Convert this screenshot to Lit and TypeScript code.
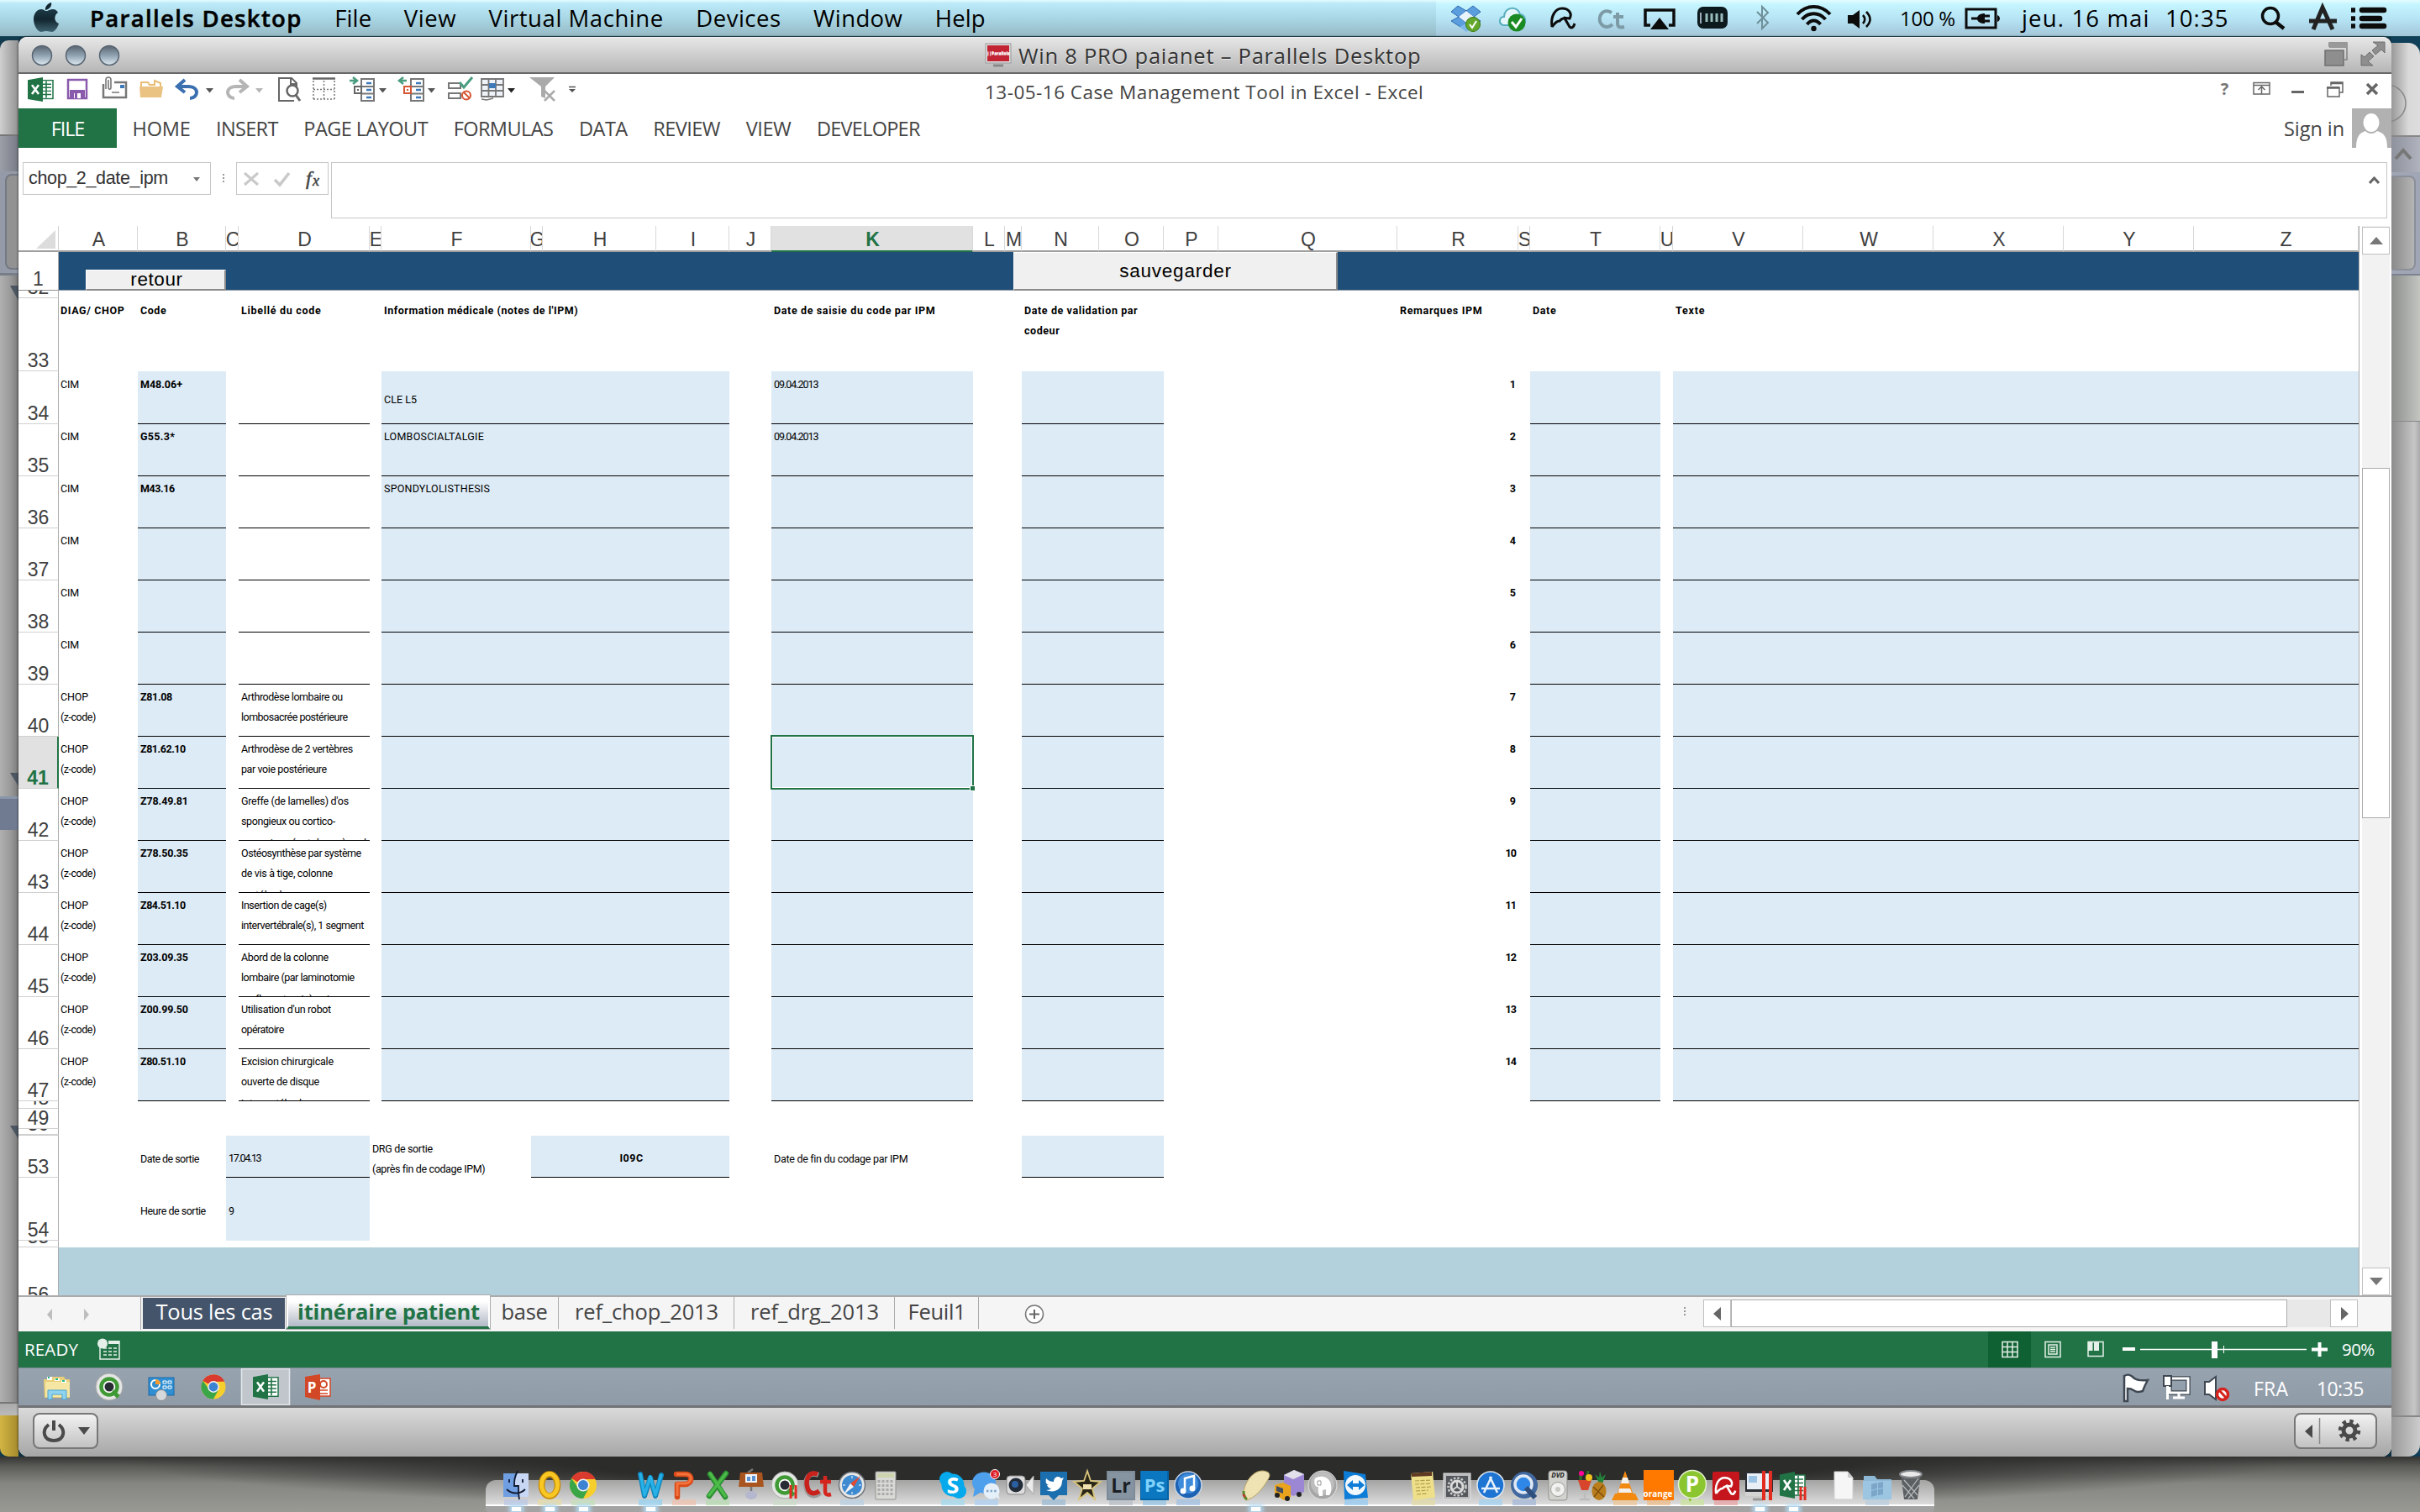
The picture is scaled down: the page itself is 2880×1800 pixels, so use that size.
import { LitElement, html, css, svg, nothing, TemplateResult } from "lit";
import { customElement, property } from "lit/decorators.js";

/** A single line of text whose tracking is adjusted to fill a given width. */
@customElement("fit-text")
class FitText extends LitElement {
  @property({ type: Number }) w = 0;
  @property() text = "";
  static styles = css`
    :host { display: inline-block; white-space: pre; flex: none; }
    .run { display: inline-block; white-space: pre; }
  `;
  protected updated() {
    const run = this.renderRoot.querySelector(".run") as HTMLElement;
    run.style.letterSpacing = "0px";
    const natural = run.getBoundingClientRect().width;
    const count = this.text.length;
    if (this.w && count > 1) {
      run.style.letterSpacing = `${(this.w - natural) / (count - 0.5)}px`;
    }
  }
  render() {
    return html`<span class="run">${this.text}</span>`;
  }
}

const fit = (text: string, w: number) => html`<fit-text .text=${text} .w=${w}></fit-text>`;

/* ---------- sheet geometry and data ---------- */
const LETTERS = "ABCDEFGHIJKLMNOPQRSTUVWXYZ".split("");
const EDGES = [70, 164, 269, 284, 440, 454, 632, 646, 781, 868, 918, 1158, 1196, 1216, 1308, 1385, 1450, 1663, 1807, 1821, 1976, 1991, 2146, 2301, 2456, 2611, 2807];
const COLS = EDGES.slice(1).map((e, i) => e - EDGES[i]);
const ROWS: [string, number][] = [
  ["1", 46], ["32", 9], ["33", 87], ["34", 63],
  ...Array.from({ length: 13 }, (_, i): [string, number] => [String(35 + i), 62]),
  ["48", 9], ["49", 24], ["50", 7], ["", 1], ["53", 50], ["54", 75], ["55", 8], ["56", 69],
];
const rowLine = (name: string) => ROWS.findIndex((r) => r[0] === name) + 2;
const colLine = (l: string) => LETTERS.indexOf(l) + 2;
const GRID = `grid-template-columns:48px ${COLS.map((c) => c + "px").join(" ")};grid-template-rows:31px ${ROWS.map((r) => r[1] + "px").join(" ")}`;
const area = (row: string, from: string, to: string) => `grid-area:${rowLine(row)}/${colLine(from)}/auto/${colLine(to) + 1}`;

type Line = [string, number];
const CODES: { code?: Line; label?: Line[]; info?: Line; date?: boolean; chop?: boolean }[] = [
  { code: ["M48.06+", 50], info: ["CLE L5", 39], date: true },
  { code: ["G55.3*", 41], info: ["LOMBOSCIALTALGIE", 119], date: true },
  { code: ["M43.16", 41], info: ["SPONDYLOLISTHESIS", 126] },
  {}, {}, {},
  { chop: true, code: ["Z81.08", 38], label: [["Arthrodèse lombaire ou", 121], ["lombosacrée postérieure", 127]] },
  { chop: true, code: ["Z81.62.10", 54], label: [["Arthrodèse de 2 vertèbres", 133], ["par voie postérieure", 102]] },
  { chop: true, code: ["Z78.49.81", 57], label: [["Greffe (de lamelles) d'os", 128], ["spongieux ou cortico-", 112], ["spongieux (autologue) prel", 149]] },
  { chop: true, code: ["Z78.50.35", 57], label: [["Ostéosynthèse par système", 143], ["de vis à tige, colonne", 109], ["vertébrale", 55]] },
  { chop: true, code: ["Z84.51.10", 54], label: [["Insertion de cage(s)", 102], ["intervertébrale(s), 1 segment", 146]] },
  { chop: true, code: ["Z03.09.35", 57], label: [["Abord de la colonne", 104], ["lombaire (par laminotomie", 135], ["ou flavectomie) unique", 125]] },
  { chop: true, code: ["Z00.99.50", 57], label: [["Utilisation d'un robot", 107], ["opératoire", 51]] },
  { chop: true, code: ["Z80.51.10", 54], label: [["Excision chirurgicale", 110], ["ouverte de disque", 93], ["intervertébral", 72]] },
];
const HEADS: [string, string, Line[]][] = [
  ["A", "A", [["DIAG/ CHOP", 76]]], ["B", "B", [["Code", 31]]], ["D", "D", [["Libellé du code", 95]]],
  ["F", "I", [["Information médicale (notes de l'IPM)", 231]]],
  ["K", "K", [["Date de saisie du code par IPM", 192]]],
  ["N", "O", [["Date de validation par", 135], ["codeur", 42]]],
  ["R", "R", [["Remarques IPM", 98]]], ["T", "T", [["Date", 28]]], ["V", "V", [["Texte", 35]]],
];

/* ---------- shared drawings ---------- */
const excelMark = svg`<rect x="13" y="4" width="17" height="24" fill="#fff" stroke="#217346" stroke-width="1.5"/><path d="M16 9h12M16 13.500h12M16 18h12M16 22.500h12M22 5v22" stroke="#217346" stroke-width="1.600"/><path d="M0 3.500 18 0v32L0 28.500z" fill="#217346"/><path d="m5 10 8 12m0-12-8 12" stroke="#fff" stroke-width="2.600"/>`;
const chromeMark = (cx: number, cy: number, r: number) => svg`<g transform="translate(${cx} ${cy}) scale(${r / 16})"><circle r="16" fill="#f7cf2d"/><path d="M0 0-13.900-8A16 16 0 0 1 13.900-8L0-7z" fill="#db3a2e"/><path d="M0-16A16 16 0 0 1 14.500-7H0z" fill="#db3a2e"/><path d="M-13.900-8A16 16 0 0 0 0 16L6.500 4-6 3z" fill="#3aa648"/><circle r="7.600" fill="#f4f4f4"/><circle r="6" fill="#3d83d3"/></g>`;
const qlikMark = svg`<circle cx="20" cy="20" r="16" fill="#e3e6e3" stroke="#a9aaa9"/><circle cx="20" cy="20" r="9.500" fill="#fff" stroke="#3f9a35" stroke-width="4.500"/><path d="m24 25 7 7" stroke="#3f9a35" stroke-width="5"/><circle cx="20" cy="20" r="5.500" fill="#282d33"/>`;
const umbrella = (c: string) => svg`<path d="M5 27C3 14 9 5 17 5c9 0 12 7 9 12-4-1-9-1-12 3-4 0-6 3-9 7M19 15l7 12q4 3 6-4" fill="none" stroke="${c}" stroke-width="3"/>`;
const bars = svg`<path d="M27 20v16M33 20v16" stroke="#e22c20" stroke-width="3"/>`;
const letter = (s: string, size: number, fill: string, x = 20, y = 32) => svg`<text x="${x}" y="${y}" font-size="${size}" font-weight="700" font-family="Open Sans, sans-serif" text-anchor="middle" fill="${fill}">${s}</text>`;

type DockIcon = { art: TemplateResult | unknown; on?: boolean; glow?: string };
const gap = null;
const DOCK: (DockIcon | null)[] = [
  { on: true, glow: "#b9c6e6", art: svg`<rect x="5" y="6" width="30" height="28" fill="#c8d7f4"/><path d="M5 6h17c-3 7-4 10-4 15h5c0 5 0 9 1 13H5z" fill="#6f9fe2"/><path d="M22 3c-4 8-4 12-4 18h5c0 6 0 10 1 16M12 13v4M28 13v4M9 25c6 6 16 6 22 0" fill="none" stroke="#111a30" stroke-width="1.800"/>` },
  { on: true, glow: "#e9dba0", art: svg`<ellipse cx="20" cy="20" rx="9.500" ry="13" fill="none" stroke="#c68b05" stroke-width="7.500"/><ellipse cx="20" cy="19.500" rx="9.500" ry="13" fill="none" stroke="#f8c724" stroke-width="5"/>` },
  { on: true, glow: "#c5dfb3", art: chromeMark(20, 20, 16) },
  gap,
  { on: true, glow: "#8fd0ef", art: svg`<path d="m8 7 5 26 7-22 6 22 7-25" fill="none" stroke="#0f86bd" stroke-width="6" stroke-linejoin="round" stroke-linecap="round"/><path d="m8 6 5 26 7-22 6 22 7-25" fill="none" stroke="#27b1e6" stroke-width="3.500" stroke-linejoin="round"/>` },
  { glow: "#f0c0ac", art: svg`<path d="M12 34V19h9c9 0 10-12 1-12H11" fill="none" stroke="#d84a17" stroke-width="6.500" stroke-linejoin="round" stroke-linecap="round"/><path d="M12 33V18h9c9 0 10-11 1-11H11" fill="none" stroke="#f5723c" stroke-width="3"/>` },
  { glow: "#b5dcae", art: svg`<path d="m10 33 20-27M11 7l18 27" stroke="#2b8f30" stroke-width="6.500" stroke-linecap="round"/><path d="m10 32 20-26M11 6l18 27" stroke="#4dbb4a" stroke-width="3.500" stroke-linecap="round"/>` },
  { art: svg`<path d="M16 5 22 1M20 20v14" stroke="#777" stroke-width="2.500"/><path d="M7 5h26l2 17H5z" fill="#a9551f"/><rect x="13" y="7" width="14" height="10" fill="#f1f4f9"/><path d="M15 15v-5h4v5m2 0V9h4v6" fill="#5d93d4"/><ellipse cx="20" cy="32" rx="7" ry="5" fill="#b5b7cf"/>` },
  { glow: "#cbdcc7", art: svg`${qlikMark}${bars}` },
  { art: svg`<path d="M20 8C8 3 3 14 6 25c3 9 11 9 16 4" fill="none" stroke="#999" stroke-width="6"/><path d="M19 7C9 3 4 13 7 23c2 8 9 8 14 4" fill="none" stroke="#c9211c" stroke-width="5.500"/><path d="M28 9v18c0 5 3 5 7 4M22 16h13" fill="none" stroke="#d4261f" stroke-width="4.500"/>` },
  { glow: "#b7cfe4", art: svg`<circle cx="20" cy="20" r="15.500" fill="#e7e7e7" stroke="#70757b" stroke-width="1.500"/><circle cx="20" cy="20" r="12" fill="#3e8ad0"/><path d="m30 9-8 13-4-4z" fill="#e04a33"/><path d="m10 31 8-13 4 4z" fill="#f3f3f3"/><path d="M20 9v3m0 16v3M9 20h3m16 0h3" stroke="#fff"/>` },
  { art: svg`<rect x="8" y="4" width="24" height="33" rx="1" fill="#d9d9d5" stroke="#92928e"/><rect x="10" y="6" width="20" height="5" fill="#ccd4ad"/><path d="M12 14v20M17 14v20M22 14v20M27 14v20" stroke="#aaa" stroke-width="3" stroke-dasharray="3 2"/>` },
  gap,
  { glow: "#9fdcf2", art: svg`<circle cx="20" cy="20" r="13.500" fill="#05a9ec"/><circle cx="13" cy="13" r="9" fill="#05a9ec"/><circle cx="27" cy="27" r="9" fill="#05a9ec"/>${letter("S", 27, "#fff", 20, 30)}` },
  { glow: "#a9d0f2", art: svg`<ellipse cx="17" cy="17" rx="14" ry="12.500" fill="#4e9fec"/><path d="m6 24-2 10 10-6z" fill="#4e9fec"/><circle cx="26" cy="27" r="9.500" fill="#e5f0fa"/><path d="m30 33 6 4-3-9z" fill="#e5f0fa"/><path d="M20 27h12" stroke="#7ba3c9" stroke-width="2.400" stroke-dasharray="2.400 2.200"/><circle cx="30" cy="7" r="5.500" fill="#dc1f26" stroke="#fff"/><text x="30" y="10" font-size="8" text-anchor="middle" fill="#fff" font-family="Open Sans, sans-serif">3</text>` },
  { art: svg`<rect x="4" y="9" width="22" height="22" rx="4" fill="#ddd" stroke="#888"/><path d="m27 20 9-11v22z" fill="#ececec" stroke="#aaa"/><circle cx="15" cy="20" r="8.500" fill="#222b38"/><circle cx="14" cy="19" r="4" fill="#2b5fa3"/>` },
  { glow: "#98b9d4", art: svg`<path d="M4 4h32v28H26l-6 6-6-6H4z" fill="#1c6fae"/><path d="M11 12c3 3 6 4 9 4 0-6 6-8 9-4l3-1-2 4c0 10-9 15-19 11 3 0 5-1 6-2-3 0-4-2-5-4h2c-3-1-4-3-3-8z" fill="#fff"/>` },
  { art: svg`<path d="m20 3 4 12 12 1-10 8 3 13-9-8-10 8 4-13L4 16l12-1z" fill="#2b2718" stroke="#d9c57d" stroke-width="1.800"/><path d="M15 19h10v6H15z" fill="#efe2ae"/>` },
  { glow: "#b6bec6", art: svg`<rect x="3" y="3" width="34" height="35" fill="#7d8b98"/><rect x="5" y="5" width="30" height="31" fill="#8694a1"/>${letter("Lr", 23, "#1b1e22", 20, 29)}` },
  { glow: "#8fc3e6", art: svg`<rect x="3" y="3" width="34" height="35" fill="#0563a6"/><rect x="4" y="3" width="31" height="33" fill="#0a77c0"/>${letter("Ps", 22, "#7fd2fb", 20, 28)}` },
  { glow: "#9dbfe4", art: svg`<circle cx="20" cy="20" r="16" fill="#1e62b4" stroke="#c8d4e0" stroke-width="1.500"/><circle cx="20" cy="18" r="12" fill="#3d8bdb"/><path d="M16 26V12l11-3v14" fill="none" stroke="#fff" stroke-width="2.500"/><circle cx="14" cy="27" r="3.500" fill="#fff"/><circle cx="25" cy="24" r="3.500" fill="#fff"/>` },
  gap,
  { on: true, art: svg`<path d="M7 36C2 26 14 2 29 3c10 1 9 6 5 12C28 25 20 35 9 38z" fill="#efe3b4" stroke="#b7a564"/><path d="M6 27c0 5 1 8 4 10" stroke="#5f8a2a" stroke-width="3" fill="none"/><path d="m5 31 3 3" stroke="#c33" stroke-width="2"/>` },
  { art: svg`<path d="m14 8 12-6 12 5v21l-13 5-11-6z" fill="#9b87d4"/><path d="m14 8 12-6 12 5-13 6z" fill="#e2e0ea"/><path d="m3 20 10-3 9 4v13l-8 4-11-7z" fill="#e9a31c"/><path d="m5 21 8 3v6l-8-3z" fill="#444c5e"/><circle cx="6" cy="32" r="3" fill="#222"/><circle cx="18" cy="36" r="3" fill="#222"/><circle cx="32" cy="31" r="3" fill="#222"/>` },
  { art: svg`<circle cx="20" cy="20" r="17" fill="#a6a6a6" stroke="#e2e2e2"/><circle cx="20" cy="18" r="14" fill="#bdbdbd"/><path d="M11 12c6-4 14-3 18 4 2 6 2 12-1 16h-4v-7l-4 1v7h-4c-2-7-1-8-1-11-4 1-6-5-4-10z" fill="#fff"/><path d="M14 15h4v5h-4z" fill="none" stroke="#999"/>` },
  { glow: "#8fcaf5", art: svg`<path d="m5 3 26 4 3 28-28 2z" fill="#0d7dd8"/><circle cx="19" cy="20" r="12" fill="#f3f8fc"/><path d="m9 20 7-6v4h7v-4l7 6-7 6v-4h-7v4z" fill="#0d7dd8"/>` },
  gap,
  { glow: "#e4dca2", art: svg`<path d="m5 6 26-2 3 31-26 3z" fill="#eee08a"/><path d="m5 6 25-2v5L6 10z" fill="#5f3a22"/><path d="m10 15 19-1M10 19l19-1M11 23l18-1M11 27l15-1M12 31l12-1" stroke="#b09f49" stroke-width="1.200" stroke-dasharray="5 1.500"/>` },
  { art: svg`<rect x="4" y="6" width="32" height="31" fill="#b9bbbd" stroke="#e2e2e2"/><rect x="7" y="9" width="26" height="25" fill="#54585c"/><circle cx="20" cy="22" r="7" fill="none" stroke="#dadada" stroke-width="3"/><circle cx="20" cy="22" r="10.500" fill="none" stroke="#cfcfcf" stroke-width="2.500" stroke-dasharray="2.500 2"/><path d="M20 22v-7m0 7-6 4m6-4 6 4" stroke="#dadada" stroke-width="2"/>` },
  { glow: "#9ed2f4", art: svg`<circle cx="20" cy="20" r="16" fill="#1e74d2" stroke="#dce6f0" stroke-width="1.600"/><path d="m12 29 9-19M19 10l9 19M9 24h22" stroke="#e8f2fc" stroke-width="2.600"/>` },
  { glow: "#9fb6d8", art: svg`<circle cx="20" cy="20" r="16" fill="#41699f"/><circle cx="19" cy="19" r="10" fill="#2f88e8" stroke="#dfe8f4" stroke-width="3.500"/><path d="m22 23 11 12" stroke="#304f7d" stroke-width="6"/>` },
  { art: svg`<rect x="9" y="3" width="22" height="35" rx="3" fill="#d2d2ce" stroke="#91918d"/><text x="20" y="11" font-size="8" font-weight="700" font-style="italic" text-anchor="middle" font-family="Open Sans, sans-serif" fill="#222">DVD</text><circle cx="20" cy="25" r="8.500" fill="#f1f1ef" stroke="#9b9b97"/><circle cx="20" cy="25" r="3" fill="#c8c8c4"/>` },
  { art: svg`<path d="M4 14h16l-4 12h-8z" fill="#d8452d"/><path d="M12 26v10M6 37h12" stroke="#bcbcbc" stroke-width="2.500"/><path d="M7 4v10M16 3l-2 11" stroke="#2f6f2a" stroke-width="3"/><circle cx="8" cy="6" r="3" fill="#f09"/><circle cx="17" cy="11" r="4" fill="#f2c11d"/><path d="m29 18-5-11 5 4 1-8 2 8 5-4-4 11z" fill="#23823a"/><ellipse cx="29" cy="27" rx="8.500" ry="11" fill="#b97d1c"/><path d="m22 22 13 12m-1-14L23 34" stroke="#7c4d0c" stroke-width="1.400"/>` },
  { glow: "#efc591", art: svg`<path d="M8 30h24l4 8H4z" fill="#f28a12"/><path d="M20 3 10 32h20z" fill="#f28a12"/><path d="m17 11-2 7h10l-2-7zM13 24l-1 5h16l-2-5z" fill="#f4f1ec"/>` },
  { glow: "#efba82", art: svg`<rect x="2" y="2" width="36" height="36" fill="#ff7900"/><text x="19" y="34" font-size="10" font-weight="700" text-anchor="middle" font-family="Open Sans, sans-serif" fill="#fff">orange</text>` },
  { glow: "#cae49a", art: svg`<path d="M14 32l3 8 6-9z" fill="#86bd2b"/><circle cx="20" cy="19" r="16.500" fill="#8bc52f" stroke="#e7f3d2" stroke-width="1.500"/>${letter("P", 26, "#fff", 20, 28)}` },
  { glow: "#e7a0a0", art: svg`<rect x="4" y="4" width="32" height="34" rx="2" fill="#c4161c"/><g transform="translate(4 7) scale(.85)">${umbrella("#fff")}</g>` },
  { on: true, art: svg`<rect x="3" y="4" width="33" height="24" fill="#2b2f35"/><rect x="5" y="6" width="26" height="19" fill="#e9eff6"/><path d="M7 9h10v8H7z" fill="#9cc3e4"/><path d="M3 28h30v5H3z" fill="#d3d3d3"/><path d="M12 37h12" stroke="#999" stroke-width="3"/><path d="M25 3v35M33 3v35" stroke="#e22c20" stroke-width="4"/>` },
  { on: true, art: svg`<g transform="translate(4 4)">${excelMark}</g><path d="M29 22v16M34 22v16" stroke="#e22c20" stroke-width="3"/>` },
];
const DOCK_END: DockIcon[] = [
  { art: svg`<path d="M9 4h16l6 7v26H9z" fill="#f6f6f6" stroke="#cfcfcf"/><path d="M25 4v7h6z" fill="#c9c9c9"/>` },
  { glow: "#b7cfe0", art: svg`<path d="M4 9h13l3 4h17v24H4z" fill="#8db8d6"/><path d="M3 15h34v22H3z" fill="#9cc5e1"/><path d="m13 19 7-2v7l-7 2zm8-2 6-1v7l-6 1zm-8 10 7-2v7l-7 2zm8-2 6-1v7l-6 1z" fill="#7ba6c8"/>` },
  { art: svg`<path d="m8 6 4 31h16l4-31z" fill="#5d6063"/><ellipse cx="20" cy="7" rx="13" ry="4" fill="#e9e9e9" stroke="#83878b" stroke-width="2"/><path d="m12 14 16 18m1-20L13 34M10 20l14 16M30 20 17 36" stroke="#b9bcbf" stroke-width="1.200"/>` },
];

@customElement("app-root")
class AppRoot extends LitElement {
  static styles = css`
    :host { display: block; width: 2880px; height: 1800px; overflow: hidden; background: #8b8b87; font-family: "Open Sans", "Noto Sans", sans-serif; color: #444; }
    * { box-sizing: border-box; }
    svg { display: block; flex: none; }
    .screen { width: 2880px; height: 1800px; display: flex; flex-direction: column; }
    .menubar { height: 44px; flex: none; display: flex; align-items: center; padding-bottom: 1px; border-bottom: 1px solid #17485a; color: #000; font-size: 27.5px; background: linear-gradient(180deg, #e4fbff 0, #bdeaf9 4px, #a9d6e4 22px, #95b9c4 43px); }
    .menus { display: flex; gap: 38.5px; width: 1602px; flex: none; }
    .menus .app { font-weight: 600; -webkit-text-stroke: .5px #000; }
    .apple { width: 107px; }
    .extras { display: flex; align-items: center; height: 43px; width: 1171px; background: linear-gradient(180deg, #e4fcff 0, #c5f6ff 5px, #b5e2f3 24px, #a2c6d8 43px); }
    .pct { font-size: 24px; width: 77px; }
    .day { width: 171px; margin-left: 20px; }
    .clock { width: 109px; }
    .stage { height: 1690px; flex: none; display: flex; background: #0e3548; }
    .side { flex: none; display: flex; flex-direction: column; }
    .side > div { flex: none; }
    .side.west { width: 22px; padding-top: 4px; background: #123b4d; }
    .l-top { height: 114px; border-radius: 10px 0 0 0; background: linear-gradient(90deg, #cfcfcf, #929292); border-bottom: 2px solid #777; }
    .l-tool { height: 42px; background: linear-gradient(90deg, #9c9fa8, #777b85); }
    .l-card { height: 124px; padding: 3px 0 4px 6px; background: #949aa7; border-bottom: 3px solid #787e89; }
    .l-card i { display: block; height: 100%; border: 2px solid #747a83; border-right: 0; border-radius: 8px 0 0 8px; background: #929292; }
    .l-body { height: 1341px; background: linear-gradient(90deg, #b0b0b0, #989898 60%, #7a7a7a); }
    .l-foot { height: 16px; background: linear-gradient(#aaa, #bbb); border-top: 2px solid #777; }
    .l-yellow { height: 49px; background: linear-gradient(90deg, #d3b544, #a58a2c); border-radius: 0 0 0 10px; }
    .side.east { width: 34px; padding-top: 7px; background: #104059; }
    .r-top { height: 112px; border-radius: 0 14px 0 0; background: linear-gradient(90deg, #999, #d9d9d9 60%, #ddd); border-bottom: 2px solid #888; }
    .r-tool { height: 42px; background: linear-gradient(90deg, #8e929c, #b0b3bd); }
    .r-card { height: 123px; background: #a1a6b6; padding: 4px 5px 4px 0; border-bottom: 2px solid #7d8290; }
    .r-card i { display: block; height: 100%; background: linear-gradient(90deg, #8a8a8a, #b5b5b5); border: 2px solid #8b8f98; border-left: 0; border-radius: 0 8px 8px 0; }
    .r-doc { height: 174px; background: linear-gradient(90deg, #8d8f8d, #c3c5c1); border-bottom: 1px solid #888; }
    .r-body { height: 1183px; background: linear-gradient(90deg, #8c8c8c, #c6c6c6 80%, #aaa); }
    .r-foot { height: 49px; background: linear-gradient(90deg, #999, #ccc); border-top: 2px solid #888; border-radius: 0 0 14px 0; }
    .win { width: 2824px; display: flex; flex-direction: column; background: #fff; border-radius: 10px 10px 12px 12px; overflow: hidden; box-shadow: 0 0 3px #222; }
    .title { height: 44px; flex: none; border-bottom: 2px solid #68686a; border-top: 1px solid #f1f1f1; background: linear-gradient(#e6e6e6, #b6b6b6); display: flex; align-items: center; font-size: 25.5px; color: #333; text-shadow: 0 1px 0 #eee; }
    .title .mid { display: flex; align-items: center; gap: 8px; margin-left: 1020px; }
    .title .corner-btns { margin-left: auto; }
    .qat { height: 41px; flex: none; display: flex; align-items: center; font-size: 22.5px; }
    .doc { margin: 1px auto 0 450px; }
    .tabs { height: 47px; flex: none; display: flex; align-items: center; gap: 30.6px; font-size: 23.5px; }
    .file { width: 117px; height: 47px; display: flex; align-items: center; justify-content: center; background: #217346; color: #fff; margin-right: -12px; padding-left: 0; }
    .signin { margin-left: auto; display: flex; gap: 9px; align-items: center; }
    .formula { display: flex; height: 93px; flex: none; padding: 17px 5px 17px 5px; align-items: flex-start; }
    .box { height: 39px; border: 1.5px solid #c6c6c6; background: #fff; display: flex; align-items: center; }
    .name { width: 224px; padding: 0 12px 0 6px; justify-content: space-between; font: 21.5px "Liberation Sans", sans-serif; color: #333; }
    .fx { width: 110px; }
    .input { flex: 1; height: 67px; margin-left: 3px; justify-content: flex-end; align-items: flex-start; padding: 16px 8px; }
    .gridzone { height: 1273px; flex: none; display: flex; overflow: hidden; }
    .sheet { display: grid; width: 2786px; height: 1273px; overflow: hidden; border-right: 1px solid #ababab; flex: none; }
    .corner { border-bottom: 2px solid #9f9f9f; border-right: 1px solid #d0d0d0; display: flex; justify-content: flex-end; padding: 5px 3px; }
    .ch { border-bottom: 2px solid #9f9f9f; border-right: 1px solid #d8d8d8; font: 23px/32px "Liberation Sans", sans-serif; overflow: hidden; display: flex; justify-content: center; padding-left: 2px; color: #404040; }
    .ch.last { padding-left: 24px; }
    .ch.sel { background: #e1e1e1; color: #217346; font-weight: 700; border-bottom: 2px solid #217346; }
    .rh { border-bottom: 1px solid #d0d0d0; border-right: 1px solid #ababab; font: 23px/23px "Liberation Sans", sans-serif; display: flex; align-items: flex-end; justify-content: center; overflow: hidden; color: #404040; grid-column: 1; }
    .rh.sel { background: #e1e1e1; color: #217346; font-weight: 700; border-right: 2px solid #217346; }
    .rh.r1 { border-bottom: 1px solid #8f8f8f; line-height: 25px; }
    .banner { background: #1f4e78; border-bottom: 1px solid #8f9aa5; }
    .btn { background: #f0f0f0; border: 1px solid #fff; border-right: 2px solid #8a8a8a; border-bottom: 2px solid #8a8a8a; font: 22.5px "Liberation Sans", sans-serif; color: #000; display: flex; justify-content: center; align-items: center; z-index: 1; }
    .retour { margin: 21px 0 0 32px; padding-left: 3px; }
    .save { margin: 0 0 0 10px; width: 386px; padding-left: 1px; }
    .c { font: 12.5px/24px Roboto, "Liberation Sans", sans-serif; color: #000; padding: 3px 0 0 3px; display: flex; flex-direction: column; overflow: hidden; align-items: flex-start; }
    .c > :nth-child(3) { margin-top: 2px; }
    .c.a { padding-left: 2px; }
    .c.first { padding-top: 4px; }
    .c.b { font-weight: 700; }
    .c.fill { background: #ddebf6; }
    .c.line { border-bottom: 1.5px solid #000; }
    .c.num { align-items: flex-end; padding-right: 3px; }
    .c.low { padding-top: 22px; }
    .c.mid { justify-content: center; padding-top: 5px; }
    .c.mid54 { padding-top: 28px; }
    .c.ctr { align-items: center; }
    .teal { background: #b2d1dc; }
    .sel-box { border: 2px solid #217346; outline: 0; margin: -2px -1px -1px -1px; box-shadow: inset 0 0 0 1px #fff; z-index: 2; display: flex; align-items: flex-end; justify-content: flex-end; }
    .sel-box i { width: 5px; height: 5px; background: #217346; margin: 0 -3px -3px 0; box-shadow: 0 0 0 1px #fff; }
    .vscroll { width: 33px; margin-left: 3px; display: flex; flex-direction: column; background: #f2f2f2; }
    .sb { border: 1.5px solid #c0c0c0; background: #fff; display: flex; align-items: center; justify-content: center; flex: none; }
    .vscroll .sb { height: 33px; }
    .vscroll .up { margin-top: 1px; }
    .vscroll .thumb { height: 417px; margin-top: 254px; border-color: #ababab; }
    .vscroll .down { margin-top: auto; }
    .bottom { height: 43px; flex: none; display: flex; background: #f5f5f5; border-top: 2px solid #ababab; font-size: 25.5px; }
    .nav { width: 146px; padding-top: 11px; padding-left: 33px; border-right: 1px solid #ababab; height: 39px; flex: none; }
    .st { height: 38px; display: flex; align-items: center; justify-content: center; border-right: 1px solid #ababab; padding: 0 0 4px 1px; flex: none; }
    .st.dark { background: #44546a; color: #fff; width: 169px; margin: 1px 2px 0 2px; height: 37px; border: 0; padding-bottom: 5px; }
    .st.on { width: 242px; height: 40px; margin-top: -2px; color: #217346; font-weight: 700; background: linear-gradient(#fff 15%, #b3bac6); border: 2px solid #fff; border-bottom: 3px solid #217346; box-shadow: 0 0 0 1px #ababab; padding-bottom: 2px; }
    .plus { padding: 9px 0 0 54px; flex: 1; }
    .hscroll { display: flex; width: 843px; padding: 3px 0 0; height: 36px; flex: none; gap: 0; }
    .dots { width: 24px; padding-top: 8px; }
    .hscroll .sb { width: 33px; }
    .hscroll .hthumb { width: 662px; border-color: #ababab; }
    .hscroll .trk { width: 51px; background: #e8e8e8; }
    .status { height: 43px; flex: none; background: #217346; color: #fff; font-size: 20.5px; display: flex; align-items: center; padding: 0 0 1px 7px; gap: 22px; }
    .status .views { margin-left: auto; }
    .zoom { width: 59px; margin-left: -23px; }
    .task { height: 48px; flex: none; background: linear-gradient(#98a3b0, #909ba8); border-top: 1px solid #7f8a96; border-bottom: 3px solid #727376; display: flex; align-items: center; color: #fff; font-size: 23px; }
    .task .tray { margin-left: auto; }
    .fra { width: 75px; padding-top: 4px; }
    .tclock { width: 89px; padding-top: 4px; }
    .foot { height: 58px; flex: none; background: linear-gradient(#dadada, #a6a6a6); display: flex; justify-content: space-between; padding: 6px 17px; }
    .fb { height: 43px; border: 2px solid #777; border-radius: 8px; background: linear-gradient(#f2f2f2, #c2c2c2); display: flex; align-items: center; }
    .desk { height: 66px; flex: none; background: radial-gradient(ellipse 1300px 70px at 50% 0, #2c2c2b 60%, #2c2c2b00), linear-gradient(#333331 0, #5c5c59 12px, #858581 32px, #9a9a95); display: flex; justify-content: center; align-items: flex-end; }
    .dock { width: 1724px; height: 52px; display: flex; flex-direction: column; justify-content: flex-end; }
    .shelf { height: 38px; display: flex; align-items: flex-end; padding-left: 16px; border-bottom: 7px solid #a3a3a3; background: linear-gradient(#a3a3a2, #c8c8c8 60%, #dcdcdc 29px, #fff 29px, #fff); clip-path: polygon(0 -30px, 1724px -30px, 1724px 100%, 0 100%); border-radius: 12px 12px 4px 4px; }
    .slot { width: 40px; height: 52px; margin-bottom: -7px; display: flex; flex-direction: column; align-items: center; flex: none; }
    .slot svg { margin-bottom: 6px; overflow: visible; }
    .on-dot { width: 11px; height: 5px; background: #fff; box-shadow: 0 0 5px 3px #b4dcf5; }
    .brk { width: 20px; flex: none; }
  `;

  private menubar() {
    const items: Line[] = [["File", 44], ["View", 62], ["Virtual Machine", 208], ["Devices", 101], ["Window", 106], ["Help", 60]];
    return html`<div class="menubar">
      <svg class="apple" width="107" height="43" viewBox="0 0 107 43">
        <defs><linearGradient id="ap" x2="0" y2="1"><stop offset="0" stop-color="#1d3a46"/><stop offset=".45" stop-color="#12262f"/><stop offset="1" stop-color="#3f6371"/></linearGradient></defs>
        <path d="M61 3c1 4-2 8-7 9-1-4 3-8 7-9z" fill="#12262f"/>
        <path d="M55 13c3 0 4-2 8-2 3 0 5 2 6 4-5 3-5 11 1 13-1 4-5 10-8 10s-4-1-7-1-4 1-6 1c-5 0-9-9-9-15 0-7 4-12 9-12 3 0 4 2 6 2z" fill="url(#ap)"/>
      </svg>
      <div class="menus"><span class="app">${fit("Parallels Desktop", 252)}</span>${items.map(([t, w]) => fit(t, w))}</div>
      <div class="extras">
        <svg width="552" height="43" viewBox="1709 0 552 43">
          <path d="m1735 7 10 6-9 7-9-6zM1753 7l-8 6 9 7 8-6zM1727 25l9-5 9 7-7 5zM1745 27l9-7 8 5-9 7z" fill="#5a9ede" stroke="#2d68ae"/><path d="m1736 20 9-7 9 7-9 7z" fill="#e8f3fc"/><path d="m1737 32 8-5 8 5-8 6z" fill="#7db6ea"/>
          <circle cx="1753" cy="29" r="8.500" fill="#63a82d" stroke="#3b7a12"/><path d="m1749 29 3 4 5-8" fill="none" stroke="#fff" stroke-width="2"/>
          <path d="M1789 30c-6-2-5-10 1-10 0-12 16-14 19-3 7 1 8 10 3 13z" fill="#e6f7fb" stroke="#58aebd" stroke-width="2"/><circle cx="1805" cy="27" r="10.500" fill="#1b8a22"/><path d="m1799 26 5 6 7-10" fill="none" stroke="#fff" stroke-width="3"/>
          <g transform="translate(1842 5)">${umbrella("#0c0c0c")}</g>
          <path d="M1918 15c-12-7-18 8-12 14 4 5 10 3 13 0M1925 15v13c0 5 4 5 8 4M1920 20h12" fill="none" stroke="#7d9ba6" stroke-width="4"/>
          <path d="M1964 30h-6V12h34v18h-6" fill="none" stroke="#0c0c0c" stroke-width="3.500"/><path d="m1975 21 11 14h-22z" fill="#0c0c0c"/>
          <rect x="2020" y="8" width="36" height="26" rx="7" fill="#0c1a1e"/><path d="M2031 16v10m6-10v10m6-10v10m6-10v10" stroke="#9bb" stroke-width="3"/><path d="M2024 15v13" stroke="#cde" stroke-width="1.500"/>
          <path d="m2091 14 13 13-7 7V8l7 7-13 13" fill="none" stroke="#6f9099" stroke-width="2"/>
          <path d="M2139 17c11-12 28-12 39 0M2144.500 23c8-9 20-9 28 0M2150.500 29c5-6 11-6 16 0" fill="none" stroke="#0c0c0c" stroke-width="4"/><circle cx="2158.500" cy="34" r="3.200" fill="#0c0c0c"/>
          <path d="M2199 18h6l8-6v22l-8-6h-6z" fill="#0c0c0c"/><path d="M2217 18c3 3 3 7 0 10m4-14c6 6 6 12 0 18" fill="none" stroke="#0c0c0c" stroke-width="2.600"/>
        </svg>
        <span class="pct">${fit("100 %", 66)}</span>
        <svg width="48" height="43" viewBox="2338 0 48 43"><path d="M2346 11h-6v22h6M2369 11h6v22h-6M2346 11h25M2346 33h25" fill="none" stroke="#0c0c0c" stroke-width="3"/><path d="M2377 18c4 2 4 6 0 8z" fill="#0c0c0c"/><path d="M2346 22h8M2362 19h6m-6 6h6" stroke="#0c0c0c" stroke-width="3"/><path d="M2362 16v12c-5 0-9-2-9-6s4-6 9-6z" fill="#0c0c0c"/></svg>
        <span class="day">${fit("jeu. 16 mai", 152)}</span><span class="clock">${fit("10:35", 75)}</span>
        <svg width="160" height="43" viewBox="2686 0 160 43"><circle cx="2702" cy="19" r="9.500" fill="none" stroke="#0c0c0c" stroke-width="3.500"/><path d="m2708 26 10 8" stroke="#0c0c0c" stroke-width="4.500"/><path d="m2753 35 11-26 12 26M2748 25h33" fill="none" stroke="#222" stroke-width="5"/><path d="M2811 12h26M2811 22h21M2811 31h26" stroke="#0c0c0c" stroke-width="6.500" stroke-linecap="round"/><path d="M2798 12h5M2798 22h5M2798 31h5" stroke="#0c0c0c" stroke-width="5.500"/></svg>
      </div>
    </div>`;
  }

  private titleBar() {
    return html`<div class="title">
      <svg width="130" height="41" viewBox="22 45 130 41"><defs><linearGradient id="tl" x2="0" y2="1"><stop offset="0" stop-color="#59646f"/><stop offset=".5" stop-color="#8fa2b1"/><stop offset="1" stop-color="#dfeaf2"/></linearGradient></defs>
        ${[50, 90, 130].map((x) => svg`<circle cx="${x}" cy="66" r="11.500" fill="url(#tl)" stroke="#566370" stroke-width="1.500"/>`)}</svg>
      <div class="mid"><svg width="32" height="30" viewBox="0 0 32 30"><rect x="1" y="1" width="30" height="23" fill="#ddd" stroke="#999"/><rect x="3" y="3" width="26" height="19" fill="#c32433"/><text x="16" y="14" font-size="5" font-weight="700" text-anchor="middle" font-family="Open Sans, sans-serif" fill="#fff">||Parallels</text><path d="M10 27h12" stroke="#888" stroke-width="3"/></svg>${fit("Win 8 PRO paianet – Parallels Desktop", 479)}</div>
      <svg class="corner-btns" width="85" height="41" viewBox="2761 45 85 41"><path d="M2772 56v-5h21v20h-3M2772 53h21" fill="none" stroke="#808080" stroke-width="1.500"/><path d="M2772 51h21v6h-21z" fill="#999"/><rect x="2767" y="60" width="22" height="18" fill="#8e8e8e" stroke="#6f6f6f" stroke-width="1.500"/><path d="M2824 50h14v13l-4-4-7 6-4-5 7-6zM2810 65l4 3 6-6 5 5-7 6 6 5h-14z" fill="#8e8e8e" stroke="#6f6f6f"/></svg>
    </div>`;
  }

  private quickAccess() {
    const drop = (x: number, c = "#555") => svg`<path d="M${x} 105h9l-4.500 5.500z" fill="${c}"/>`;
    const outline = (x: number, c: string, m: string) => svg`<path d="M${x} 96h8m-4-4 5 4-5 4" fill="none" stroke="#4a9d7f" stroke-width="2.500" transform="${m}"/><path d="M${x + 14} 94h15v26h-15zM${x + 14} 103h15M${x + 14} 111.500h15" fill="#fff" stroke="#777" stroke-width="2"/><path d="M${x + 20} 99h6m-6 8h6m-6 9h6" stroke="#3d78b8" stroke-width="2.500"/><path d="M${x + 6} 103h8v8h-8zM${x + 9} 107h2" fill="none" stroke="${c}" stroke-width="2"/>`;
    return html`<div class="qat">
      <svg width="700" height="41" viewBox="22 88 700 41">
        <g transform="translate(33 92) scale(1 .91)">${excelMark}</g>
        <path d="M81 95h22v22H81z" fill="#fff" stroke="#8a5aac" stroke-width="2.500"/><path d="M83 107h18v10H83z" fill="#8a5aac"/><path d="M88 111h8v6h-8z" fill="#fff"/><path d="M89 111h3v6h-3z" fill="#8a5aac"/>
        <path d="M136 98h14v18h-27v-16" fill="none" stroke="#777" stroke-width="2.500"/><path d="M143 101h5v4h-5z" fill="#3d78b8"/><path d="M133 110h9M126 106V95c0-4 6-4 6 0v9c0 3-3 3-3 0v-9" fill="none" stroke="#777" stroke-width="1.600"/>
        <path d="M168 116V98h8l2 3h6v-5l7 3v16" fill="#fff" stroke="#e8bd74" stroke-width="2"/><path d="M166 103h28l-2 13h-25z" fill="#eac282"/>
        <path d="M220 95l-9 8 9 7M212 103h12c14 0 12 14 2 14" fill="none" stroke="#3a6fb0" stroke-width="4"/>${drop(245)}
        <path d="M285 95l9 8-9 7M293 103h-12c-14 0-12 14-2 14" fill="none" stroke="#b5b5b5" stroke-width="4"/>${drop(304, "#b5b5b5")}
        <path d="M350 120h-18V93h15l6 6v5M346 93v7h7" fill="none" stroke="#666" stroke-width="2"/><circle cx="348" cy="108" r="6.500" fill="#fff" stroke="#666" stroke-width="2.500"/><path d="m352 113 5 7" stroke="#666" stroke-width="3"/>
        <path d="M372 93.500h27" stroke="#666" stroke-width="2.500"/><path d="M373 96v23M385.500 96v23M398 96v23M373 106.500h25M373 118h25" stroke="#777" stroke-width="1.500" stroke-dasharray="2 2"/>
        ${outline(416, "#666", "")}${drop(451)}
        <g>${outline(475, "#d65532", "rotate(180 479.500 96)")}</g>${drop(509)}
        <path d="M534 99h14v6h-14zM534 111h14v6h-14z" fill="#fff" stroke="#777" stroke-width="2"/><path d="m547 98 5 6 10-12" fill="none" stroke="#4a9d7f" stroke-width="3"/><circle cx="555" cy="113.500" r="5" fill="#fff" stroke="#d65532" stroke-width="2"/><path d="m552 110 7 7" stroke="#d65532" stroke-width="2"/>
        <path d="M573 94h26v21h-26zM573 101h26M573 108h26M581.500 94v21M590 94v21" fill="#eef3f9" stroke="#777" stroke-width="1.800"/><path d="M582 99h8v6h-8z" fill="#3d78b8"/><path d="m573 118 6 1 8-2" stroke="#777" stroke-width="1.500" fill="none"/>${drop(604, "#222")}
        <path d="M630 92h30l-11 11v14l-5-2v-12z" fill="#aaa"/><path d="m648 108 12 12m0-12-12 12" stroke="#aaa" stroke-width="2.500"/>
        <path d="M677 103.500h8" stroke="#555" stroke-width="1.500"/><path d="M677 106h8l-4 4z" fill="#555"/>
      </svg>
      <span class="doc">${fit("13-05-16 Case Management Tool in Excel - Excel", 522)}</span>
      <svg width="213" height="41" viewBox="2633 88 213 41"><text x="2647.500" y="113" font-size="20" font-weight="700" text-anchor="middle" font-family="Open Sans, sans-serif" fill="#777">?</text><path d="M2682 98.500h19V112h-19zM2682 101.500h19M2691.500 112v-8m-4 3 4-4 4 4" fill="none" stroke="#666" stroke-width="1.500"/><path d="M2727 109.500h15" stroke="#666" stroke-width="3"/><path d="M2774 102v-4h14v12h-5M2774 98.500h14" fill="none" stroke="#666" stroke-width="1.500"/><path d="M2770 104h14v11h-14z" fill="#fff" stroke="#666" stroke-width="1.500"/><path d="M2769 104.500h15M2774 99h14" stroke="#666" stroke-width="2.500"/><path d="m2817 100 12 12m0-12-12 12" stroke="#666" stroke-width="3.500"/></svg>
    </div>`;
  }

  private ribbon() {
    const tabs: Line[] = [["HOME", 69], ["INSERT", 74], ["PAGE LAYOUT", 148], ["FORMULAS", 119], ["DATA", 58], ["REVIEW", 80], ["VIEW", 54], ["DEVELOPER", 123]];
    return html`<div class="tabs"><div class="file">${fit("FILE", 40)}</div>${tabs.map(([t, w]) => fit(t, w))}
      <div class="signin">${fit("Sign in", 72)}<svg width="47" height="47" viewBox="0 0 47 47"><path d="M0 0h47v47H0z" fill="#b1b1b1"/><ellipse cx="23" cy="17" rx="9.500" ry="11" fill="#fff"/><path d="M5 47c0-13 4-18 11-20 4 4 10 4 14 0 8 2 12 7 12 20z" fill="#fff"/></svg></div></div>`;
  }

  private formulaBar() {
    return html`<div class="formula">
      <div class="box name">${fit("chop_2_date_ipm", 166)}<svg width="8" height="6"><path d="M0 1h8L4 6z" fill="#777"/></svg></div>
      <svg width="30" height="39"><path d="M15 14v12" stroke="#999" stroke-width="2" stroke-dasharray="2 2"/></svg>
      <div class="box fx"><svg width="107" height="36" viewBox="0 0 107 36"><path d="m9 11 16 14m0-14L9 25" stroke="#c9c9c9" stroke-width="3"/><path d="m45 19 6 6 11-14" fill="none" stroke="#c9c9c9" stroke-width="3.500"/><text x="82" y="25" font-size="24" font-style="italic" font-family="Liberation Serif, serif" fill="#444" stroke="#444" stroke-width=".5">f</text><text x="90" y="26" font-size="18" font-style="italic" font-family="Liberation Serif, serif" fill="#444" stroke="#444" stroke-width=".5">x</text></svg></div>
      <div class="box input"><svg width="13" height="9"><path d="m1 8 5.500-6L12 8" fill="none" stroke="#666" stroke-width="3"/></svg></div>
    </div>`;
  }

  private cell(row: string, from: string, to: string, cls: string, lines: Line[] = []) {
    return html`<div class="c ${cls}" style=${area(row, from, to)}>${lines.map(([t, w]) => fit(t, w))}</div>`;
  }

  private sheet() {
    const body: unknown[] = [];
    CODES.forEach((r, i) => {
      const row = String(34 + i);
      const top = i === 0 ? " first" : "";
      body.push(this.cell(row, "A", "A", "a" + top, r.chop ? [["CHOP", 33], ["(z-code)", 42]] : [["CIM", 22]]));
      body.push(this.cell(row, "B", "B", "b fill line" + top, r.code ? [r.code] : []));
      body.push(this.cell(row, "D", "D", "line", r.label ?? []));
      body.push(this.cell(row, "F", "I", i === 0 ? "fill line low" : "fill line", r.info ? [r.info] : []));
      body.push(this.cell(row, "K", "K", "fill line" + top, r.date ? [["09.04.2013", 53]] : []));
      body.push(this.cell(row, "N", "O", "fill line"));
      body.push(this.cell(row, "R", "R", "b num" + top, [[String(i + 1), i > 8 ? 13 : 7]]));
      body.push(this.cell(row, "T", "T", "fill line"));
      body.push(this.cell(row, "V", "Z", "fill line"));
    });
    return html`<div class="sheet" style=${GRID}>
      <div class="corner"><svg width="23" height="22"><path d="M23 0v22H0z" fill="#dcdcdc"/></svg></div>
      ${LETTERS.map((l) => html`<div class="ch ${l === "K" ? "sel" : l === "Z" ? "last" : ""}">${l}</div>`)}
      ${ROWS.map(([n], i) => html`<div class="rh ${n === "41" ? "sel" : ""} ${n === "1" ? "r1" : ""}" style="grid-row:${i + 2}">${n}</div>`)}
      <div class="banner" style=${area("1", "A", "Z")}></div>
      <div class="btn retour" style=${area("1", "A", "B")}>${fit("retour", 62)}</div>
      <div class="btn save" style=${area("1", "M", "Q")}>${fit("sauvegarder", 133)}</div>
      ${HEADS.map(([a, b, l]) => this.cell("33", a, b, a === "A" ? "b a" : "b", l))}
      ${body}
      <div class="sel-box" style=${area("41", "K", "K")}><i></i></div>
      ${this.cell("53", "B", "B", "mid", [["Date de sortie", 70]])}
      ${this.cell("53", "C", "D", "mid fill line", [["17.04.13", 39]])}
      ${this.cell("53", "E", "F", "mid", [["DRG de sortie", 72], ["(après fin de codage IPM)", 134]])}
      ${this.cell("53", "G", "I", "mid fill line b ctr", [["I09C", 28]])}
      ${this.cell("53", "K", "L", "mid", [["Date de fin du codage par IPM", 159]])}
      ${this.cell("53", "N", "O", "mid fill line")}
      ${this.cell("54", "B", "B", "mid54", [["Heure de sortie", 78]])}
      ${this.cell("54", "C", "D", "mid54 fill", [["9", 7]])}
      <div class="teal" style=${area("56", "A", "Z")}></div>
    </div>`;
  }

  private tabStrip() {
    const tabs: [string, number, number][] = [["base", 55, 82], ["ref_chop_2013", 171, 209], ["ref_drg_2013", 153, 191], ["Feuil1", 69, 100]];
    return html`<div class="bottom">
      <div class="nav"><svg width="60" height="20"><path d="M7 3v14L1 10z" fill="#bdbdbd"/><path d="M45 3v14l6-7z" fill="#bdbdbd"/></svg></div>
      <div class="st dark">${fit("Tous les cas", 139)}</div>
      <div class="st on">${fit("itinéraire patient", 217)}</div>
      ${tabs.map(([t, w, box]) => html`<div class="st" style="width:${box}px">${fit(t, w)}</div>`)}
      <div class="plus"><svg width="24" height="24"><circle cx="12" cy="11.500" r="10.500" fill="#fff" stroke="#777" stroke-width="1.500"/><path d="M6 11.500h12M12 6v11" stroke="#666" stroke-width="2"/></svg></div>
      <div class="hscroll"><div class="dots"><svg width="4" height="14"><path d="M2 1v12" stroke="#999" stroke-width="2" stroke-dasharray="2 2"/></svg></div>
        <div class="sb"><svg width="10" height="16"><path d="M9 0v16L0 8z" fill="#666"/></svg></div><div class="sb hthumb"></div><div class="trk"></div><div class="sb"><svg width="10" height="16"><path d="M1 0v16l9-8z" fill="#666"/></svg></div></div>
    </div>`;
  }

  private statusBar() {
    return html`<div class="status">${fit("READY", 64)}
      <svg width="28" height="26" viewBox="115 1593 28 26"><path d="M119 1604v14h23v-22" fill="none" stroke="#e5f0e8" stroke-width="1.500"/><path d="M129 1596h13v4h-13z" fill="#e5f0e8"/><circle cx="122" cy="1599.500" r="6" fill="#e5f0e8"/><path d="M123 1605h16M123 1609h16M123 1613h16" stroke="#e5f0e8" stroke-width="1.500" stroke-dasharray="4 2"/></svg>
      <svg class="views" width="422" height="43" viewBox="2366 1585 422 43"><path d="M2366 1585h51v43h-51z" fill="#0f6133"/><path d="M2383 1597.500h18v18h-18zM2389 1597.500v18M2395 1597.500v18M2383 1603.500h18M2383 1609.500h18" fill="none" stroke="#e5f0e8" stroke-width="1.500"/><path d="M2434 1597.500h18v18h-18zM2438 1601h10v11h-10zM2440 1604h6M2440 1606.500h6M2440 1609h6" fill="none" stroke="#e5f0e8" stroke-width="1.500"/><path d="M2485 1597.500h18v17h-18z" fill="none" stroke="#e5f0e8" stroke-width="1.500"/><path d="M2485 1597h5.500v11h-5.500zM2492 1597h6v11h-6z" fill="#e5f0e8"/><path d="M2526 1606h15" stroke="#fff" stroke-width="4"/><path d="M2547 1606.500h198" stroke="#fff" stroke-width="1.500"/><path d="M2646.500 1602v9" stroke="#fff"/><path d="M2632 1597h7v20h-7z" fill="#fff"/><path d="M2751 1606.500h19M2760.500 1598v17" stroke="#fff" stroke-width="4"/></svg>
      <span class="zoom">${fit("90%", 39)}</span></div>`;
  }

  private taskBar() {
    return html`<div class="task">
      <svg width="400" height="44" viewBox="22 1629 400 44">
        <path d="M52 1642h8l2-3h14l2 3h5v22H53z" fill="#e8cf78"/><path d="M54 1645h29v18H54z" fill="#f6e6a3"/><path d="M56 1639h6v4h-6zM65 1641h6v3h-6zM73 1643h6v3h-6z" fill="#fff"/><path d="M57 1640h2M66 1642h3M74 1644h3" stroke="#2b8" stroke-width="2"/><path d="M57 1666v-11h22v11h-5v-6H62v6z" fill="#8fd3f0" stroke="#4aa3cf"/>
        <g transform="translate(110 1631)">${qlikMark}</g>
        <rect x="177" y="1640" width="30" height="21" fill="#2f8fd2" stroke="#1b6aa6"/><circle cx="185" cy="1648" r="5" fill="none" stroke="#fff" stroke-width="2"/><path d="M185 1648v-6a6 6 0 0 1 6 6z" fill="#f49b2c"/><path d="M194 1644h4v3h-4zM200 1644h4v3h-4zM194 1650h4v3h-4zM200 1650h4v3h-4z" fill="none" stroke="#fff"/><circle cx="192" cy="1661" r="6.500" fill="#d5d8db" stroke="#8b9096"/>
        ${chromeMark(254, 1651, 14.5)}
        <rect x="287.500" y="1629.500" width="57" height="43" fill="#c0c6cc" stroke="#e5e9ec" stroke-width="1.500"/><g transform="translate(301 1636) scale(1 .94)">${excelMark}</g>
        <rect x="376" y="1641" width="17" height="21" fill="#fff" stroke="#d24726" stroke-width="1.500"/><circle cx="385" cy="1648" r="4" fill="none" stroke="#d24726" stroke-width="2"/><path d="M381 1655h9M381 1659h9" stroke="#d24726" stroke-width="1.600"/><path d="m363 1639 18-3v31l-18-4z" fill="#d24726"/><text x="371" y="1658" font-size="17" font-weight="700" text-anchor="middle" font-family="Open Sans, sans-serif" fill="#fff">P</text>
      </svg>
      <svg class="tray" width="163" height="44" viewBox="2520 1629 163 44"><path d="M2529 1668v-30c5-3 8-1 11 2s7 4 17 3c-4 7-5 10-6 13-6 2-8 1-11-1s-5-2-7-2v15z" fill="#fff" stroke="#3f4852" stroke-width="2.500"/><path d="M2583 1641h22v17h-22z" fill="none" stroke="#3f4852" stroke-width="5.500"/><path d="M2583 1641h22v17h-22zM2594 1658v6M2587 1664h14" fill="none" stroke="#fff" stroke-width="3"/><rect x="2576" y="1638" width="9" height="12" fill="#fff" stroke="#3f4852" stroke-width="2"/><path d="M2580.500 1650v16" stroke="#fff" stroke-width="3"/><path d="M2625 1645h5l8-6v27l-8-6h-5z" fill="#fff" stroke="#3f4852" stroke-width="2"/><circle cx="2646" cy="1660" r="6.500" fill="#fff" stroke="#d5231d" stroke-width="3.500"/><path d="m2642 1655 9 10" stroke="#d5231d" stroke-width="3"/></svg>
      <span class="fra">${fit("FRA", 41)}</span><span class="tclock">${fit("10:35", 56)}</span></div>`;
  }

  private footer() {
    return html`<div class="foot">
      <div class="fb"><svg width="74" height="39" viewBox="0 0 74 39"><path d="M17 12c-9 7-6 19 6 19s15-12 6-19M23 7v12" fill="none" stroke="#4a4a4a" stroke-width="4"/><path d="M52 15h14l-7 9z" fill="#4a4a4a"/></svg></div>
      <div class="fb"><svg width="95" height="39" viewBox="0 0 95 39"><path d="M20 12v16l-9-8z" fill="#4a4a4a"/><path d="M28.500 4v31" stroke="#888" stroke-width="1.500"/><circle cx="64" cy="19" r="7" fill="none" stroke="#4a4a4a" stroke-width="5"/><circle cx="64" cy="19" r="11" fill="none" stroke="#4a4a4a" stroke-width="4.500" stroke-dasharray="4.300 4.340"/></svg></div></div>`;
  }

  private dockSlot(d: DockIcon | null) {
    if (!d) return html`<div class="slot"></div>`;
    return html`<div class="slot"><svg width="40" height="40" viewBox="0 0 40 40">${d.glow ? svg`<rect x="6" y="37" width="28" height="7" fill="${d.glow}" opacity=".7"/>` : nothing}${d.art}</svg>${d.on ? html`<div class="on-dot"></div>` : nothing}</div>`;
  }

  render() {
    return html`<div class="screen">
      ${this.menubar()}
      <div class="stage">
        <div class="side west"><div class="l-top"></div><div class="l-tool"></div><div class="l-card"><i></i></div>
          <div class="l-body"><svg width="22" height="1341" viewBox="0 328 22 1341"><path d="M12 340h10v18zM12 920h10v16zM12 1340h10v16z" fill="#4b5661"/><path d="M0 948h22v40H0z" fill="#707b92"/><path d="M0 948h22v3H0z" fill="#8b95a9"/></svg></div><div class="l-foot"></div><div class="l-yellow"></div></div>
        <div class="win">
          ${this.titleBar()}${this.quickAccess()}${this.ribbon()}${this.formulaBar()}
          <div class="gridzone">${this.sheet()}
            <div class="vscroll"><div class="sb up"><svg width="16" height="9"><path d="M0 9h16L8 0z" fill="#777"/></svg></div><div class="sb thumb"></div><div class="sb down"><svg width="16" height="9"><path d="M0 0h16L8 9z" fill="#777"/></svg></div></div>
          </div>
          ${this.tabStrip()}${this.statusBar()}${this.taskBar()}${this.footer()}
        </div>
        <div class="side east"><div class="r-top"><svg width="34" height="110" viewBox="0 0 34 110"><circle cx="-5" cy="72" r="22" fill="none" stroke="#888" stroke-width="1.500"/></svg></div><div class="r-tool"><svg width="34" height="40"><path d="m5 26 9-10 9 10" fill="none" stroke="#777" stroke-width="4"/></svg></div><div class="r-card"><i></i></div><div class="r-doc"></div><div class="r-body"></div><div class="r-foot"></div></div>
      </div>
      <div class="desk"><div class="dock"><div class="shelf">${DOCK.map((d) => this.dockSlot(d))}<div class="brk"></div>${DOCK_END.map((d) => this.dockSlot(d))}</div></div></div>
    </div>`;
  }
}
